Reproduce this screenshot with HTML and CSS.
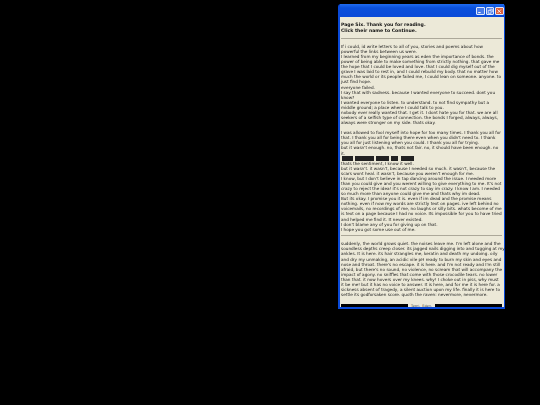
FILE: index.html
```html
<!DOCTYPE html>
<html lang="en">
  <head>
    <meta charset="UTF-8" />
    <title>Page Six</title>
    <link rel="stylesheet" href="styles.css">
  </head>
  <body>
    <div class="window">
      <div class="titlebar">
        <span class="win-btn min"><svg viewBox="0 0 8 8"><rect x="1.5" y="5" width="3" height="1.2" fill="#fff"/></svg></span>
        <span class="win-btn max"><svg viewBox="0 0 8 8"><path d="M3 1.5h3.5v3.5M1.5 3h3.5v3.5h-3.5z" fill="none" stroke="#fff" stroke-width=".8"/></svg></span>
        <span class="win-btn close"><svg viewBox="0 0 8 8"><path d="M1.8 1.8l4.4 4.4M6.2 1.8l-4.4 4.4" stroke="#fff" stroke-width="1"/></svg></span>
      </div>
      <div class="content">
        <h2 class="heading">Page Six. Thank you for reading.<br>Click their name to Continue.</h2>
        <hr class="rule rule-top">
        <p class="text">
          If i could, id write letters to all of you, stories and poems about how<br>
          powerful the links between us were.<br>
          I learned from my beginning years as eden the importance of bonds. the<br>
          power of being able to make something from strictly nothing. that gave me<br>
          the hope that I could be loved and love. that I could dig myself out of the<br>
          grave I was laid to rest in, and I could rebuild my body. that no matter how<br>
          much the world or its people failed me, I could lean on someone. anyone. to<br>
          just find hope.<br>
          everyone failed.<br>
          I say that with sadness. because I wanted everyone to succeed. dont you<br>
          know?<br>
          I wanted everyone to listen. to understand. to not find sympathy but a<br>
          middle ground; a place where I could talk to you.<br>
          nobody ever really wanted that. I get it. I dont hate you for that. we are all<br>
          seekers of a selfish type of connection. the bonds I forged, always, always,<br>
          always were stronger on my side. thats okay.<br>
          <br>
          I was allowed to fool myself into hope for too many times. I thank you all for<br>
          that. I thank you all for being there even when you didn't need to. I thank<br>
          you all for just listening when you could. I thank you all for trying.<br>
          but it wasn't enough. no, thats not fair. no, it should have been enough. no<br>
          it.<br>
          <span class="redacted">
            <span class="block w1"></span><span class="block w2"></span><span class="block w3"></span><span class="block w4"></span><span class="block w5"></span>
          </span><br>
          thats the sentiment, I know it well.<br>
          but it wasn't. it wasn't, because I needed so much. it wasn't, because the<br>
          scars wont heal. it wasn't, because you weren't enough for me.<br>
          I know, but I don't believe in tap dancing around the issue. I needed more<br>
          than you could give and you werent willing to give everything to me. It's not<br>
          crazy to reject the idea! it's not crazy to say im crazy. I know I am. I needed<br>
          so much more than anyone could give me and thats why im dead.<br>
          But its okay. I promise you it is. even if im dead and the promise means<br>
          nothing. even if now my words are strictly text on pages. ive left behind no<br>
          voicemails, no recordings of me, no laughs or silly bits. whats become of me<br>
          is text on a page because I had no voice. Its impossible for you to have tried<br>
          and helped me find it. It never existed.<br>
          I don't blame any of you for giving up on that.<br>
          I hope you got some use out of me.
        </p>
        <hr class="rule rule-mid">
        <p class="text">
          suddenly, the world grows quiet. the noises leave me. I'm left alone and the<br>
          soundless depths creep closer. its jagged nails digging into and tugging at my<br>
          ankles. It is here. its hair strangles me, keratin and death my undoing. oily<br>
          and dry my unmaking, an acidic vile pH ready to burn my skin and eyes and<br>
          nose and throat. there's no escape. it is here. and I'm not ready and I'm still<br>
          afraid, but there's no sound, no violence, no scream that will accompany the<br>
          impact of agony. no sniffles that come with those crocodile tears. no lower<br>
          than that. it now hovers over my knees. why! I choke out in piss, why must<br>
          it be me! but it has no voice to answer. It is here, and for me it is here for. a<br>
          sickness absent of tragedy, a silent auction upon my life. finally it is here to<br>
          settle its godforsaken score. quoth the raven: nevermore, nevermore.
        </p>
        <div class="footer">
          <span class="bar"></span>
          <span class="names">Teori. &nbsp;Eden.</span>
          <span class="bar"></span>
        </div>
      </div>
    </div>
  </body>
</html>
```

FILE: styles.css
```css
body {
  margin: 0;
  background-color: #000;
  font-family: "DejaVu Sans", sans-serif;
}
.window {
  position: absolute;
  left: 338px;
  top: 4px;
  width: 167px;
  height: 305px;
  box-sizing: border-box;
  display: flex;
  flex-direction: column;
  padding: 0 1.5px 2px;
  background-color: #0a4ad8;
  border-radius: 3px 3px 0 0;
}
.titlebar {
  height: 12px;
  flex: none;
  display: flex;
  justify-content: flex-end;
  align-items: center;
  gap: 1px;
  padding-top: 1px;
  background: linear-gradient(#1f6cf0, #0a50dc 30%, #0a4ad8);
}
.win-btn {
  width: 8.5px;
  height: 8.5px;
  border: 0.6px solid #dfe8fb;
  box-sizing: border-box;
  border-radius: 1px;
  display: flex;
  background-color: #4a7be8;
}
.win-btn svg {
  width: 100%;
  height: 100%;
}
.win-btn.close {
  background-color: #e0603a;
}
.content {
  flex: 1;
  min-height: 0;
  display: flex;
  flex-direction: column;
  padding: 5px 1.5px 0;
  background-color: #ece9d8;
  color: #222;
}
.heading {
  margin: 0;
  font-size: 4.6px;
  line-height: 6.2px;
  font-weight: bold;
  color: #111;
  filter: blur(0.15px);
}
.rule {
  flex: none;
  width: 100%;
  margin: 0;
  border: none;
  border-top: 0.7px solid #aca899;
}
.rule-top {
  margin-top: 3.5px;
}
.rule-mid {
  margin-top: 3.5px;
}
.text {
  margin: 5px 0 0;
  font-size: 4.2px;
  line-height: 5.08px;
  white-space: nowrap;
  filter: blur(0.15px);
}
.redacted {
  display: inline-flex;
  gap: 2px;
  height: 5px;
  margin-left: 1px;
  vertical-align: top;
}
.block {
  height: 5px;
  background-color: #222;
}
.w1 { width: 11px; }
.w2 { width: 19px; }
.w3 { width: 13px; }
.w4 { width: 7px; margin-right: 1px; }
.w5 { width: 13px; }
.footer {
  margin-top: auto;
  display: flex;
  align-items: center;
  gap: 3px;
  height: 3px;
  font-size: 3.4px;
  color: #444;
}
.bar {
  flex: 1;
  height: 3px;
  background-color: #000;
}
```
